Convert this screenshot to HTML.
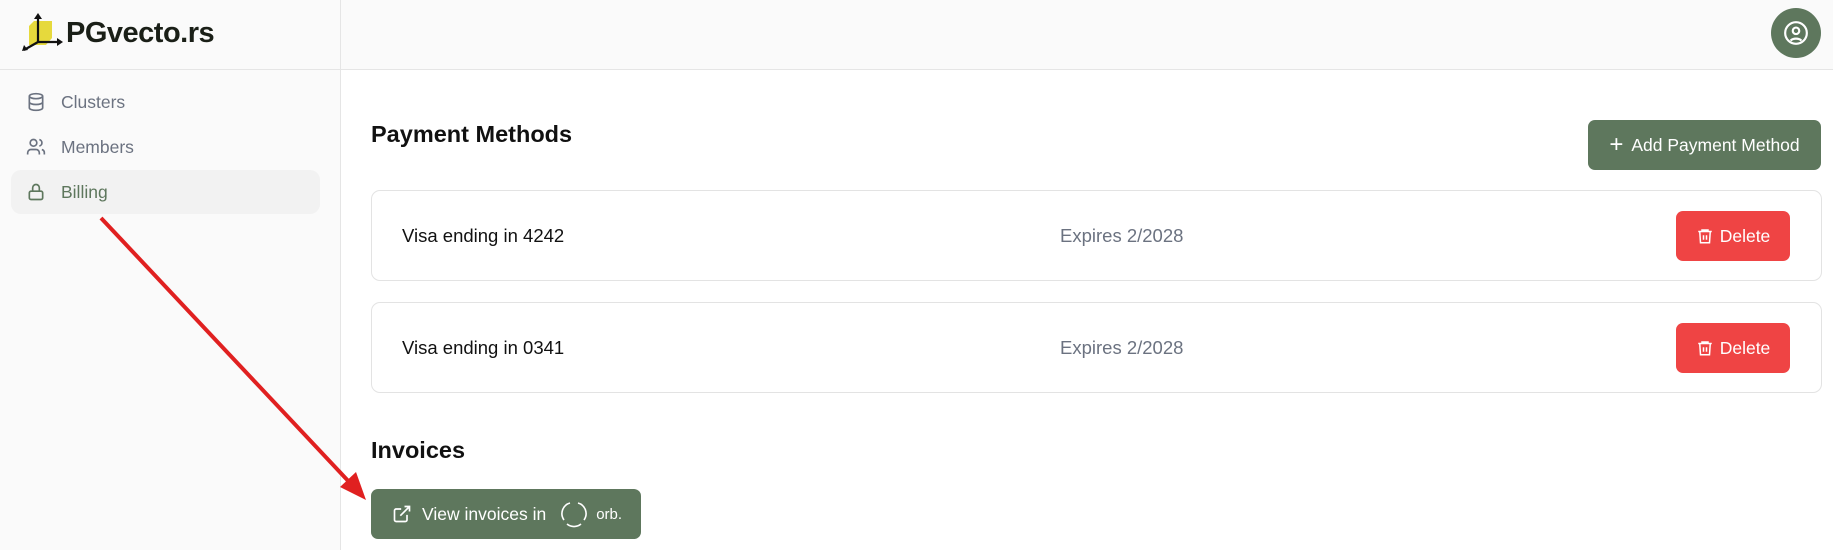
<!DOCTYPE html>
<html><head><meta charset="utf-8"><style>
*{box-sizing:border-box;margin:0;padding:0}
body{width:1833px;height:550px;background:#fff;font-family:"Liberation Sans",Roboto,sans-serif;position:relative;overflow:hidden;color:#111}
.side{position:absolute;left:0;top:0;width:341px;height:550px;background:#fafafa;border-right:1px solid #e5e5e5}
.top{position:absolute;left:341px;top:0;right:0;height:70px;background:#fafafa;border-bottom:1px solid #e5e5e5}
.sidetop{position:absolute;left:0;top:0;width:341px;height:70px;border-bottom:1px solid #e5e5e5}
.logo{position:absolute;left:66px;top:17px;font-size:29px;font-weight:bold;color:#1a1f17;letter-spacing:-0.5px}
.nav{position:absolute;left:11px;width:309px;height:44px;border-radius:10px;font-size:17.5px;color:#6b7280;display:flex;align-items:center;padding-left:50px}
.nav svg{position:absolute;left:15px;top:12px}
.h{position:absolute;left:371px;font-size:23.5px;font-weight:bold;color:#111}
.btn{position:absolute;background:#5e775d;color:#fff;border-radius:7px;font-size:17.5px;display:flex;align-items:center;justify-content:center}
.card{position:absolute;left:371px;width:1451px;height:91px;border:1px solid #e3e3e3;border-radius:9px;background:#fff}
.card .a{position:absolute;left:30px;top:34px;font-size:18.5px;color:#111}
.card .b{position:absolute;left:688px;top:34px;font-size:18.5px;color:#6b7280}
.del{position:absolute;left:1304px;top:20px;width:114px;height:50px;background:#ef4444;color:#fff;border-radius:7px;font-size:17.5px;display:flex;align-items:center;justify-content:center;gap:6px}
</style></head><body>
<div class="side"></div>
<div class="sidetop"></div>
<div class="top"></div>
<svg style="position:absolute;left:20px;top:12px" width="44" height="40" viewBox="0 0 44 40">
<polygon points="9,14 14,9 32,9 32,26 26,33 9,33" fill="#e6d93c"/>
<path d="M18 30 V4 M18 30 L40 30 M18 30 L4 38" stroke="#111" stroke-width="2.2" fill="none"/>
<polygon points="18,1 14,7 22,7" fill="#111"/><polygon points="43,30 37,26 37,34" fill="#111"/><polygon points="2,39 4,33 8,38" fill="#111"/>
</svg>
<div class="logo">PGvecto.rs</div>
<div class="nav" style="top:80px"><svg width="20" height="20" viewBox="0 0 24 24" fill="none" stroke="#6b7280" stroke-width="2"><ellipse cx="12" cy="5" rx="8" ry="3"/><path d="M4 5v14c0 1.7 3.6 3 8 3s8-1.3 8-3V5M4 12c0 1.7 3.6 3 8 3s8-1.3 8-3"/></svg>Clusters</div>
<div class="nav" style="top:125px"><svg width="20" height="20" viewBox="0 0 24 24" fill="none" stroke="#6b7280" stroke-width="2"><circle cx="9" cy="7" r="4"/><path d="M2 21v-2a4 4 0 014-4h6a4 4 0 014 4v2M16 3.1a4 4 0 010 7.8M22 21v-2a4 4 0 00-3-3.9"/></svg>Members</div>
<div class="nav" style="top:170px;background:#f2f2f2;color:#5e775d"><svg width="20" height="20" viewBox="0 0 24 24" fill="none" stroke="#5e775d" stroke-width="2"><rect x="4" y="11" width="16" height="10" rx="2"/><path d="M8 11V7a4 4 0 018 0v4"/></svg>Billing</div>
<div style="position:absolute;left:1771px;top:8px;width:50px;height:50px;border-radius:50%;background:#5e775d"></div>
<svg style="position:absolute;left:1783px;top:20px" width="26" height="26" viewBox="0 0 24 24" fill="none" stroke="#fff" stroke-width="2"><circle cx="12" cy="12" r="10"/><circle cx="12" cy="10" r="3"/><path d="M7 19a6 4 0 0110 0"/></svg>
<div class="h" style="top:121px">Payment Methods</div>
<div class="btn" style="left:1588px;top:120px;width:233px;height:50px"><span style="font-size:24px;margin-right:8px;font-weight:300">+</span>Add Payment Method</div>
<div class="card" style="top:190px"><div class="a">Visa ending in 4242</div><div class="b">Expires 2/2028</div>
<div class="del"><svg width="18" height="18" viewBox="0 0 24 24" fill="none" stroke="#fff" stroke-width="2"><path d="M3 6h18M8 6V4h8v2M5 6l1 15h12l1-15M10 11v6M14 11v6"/></svg>Delete</div></div>
<div class="card" style="top:302px"><div class="a">Visa ending in 0341</div><div class="b">Expires 2/2028</div>
<div class="del"><svg width="18" height="18" viewBox="0 0 24 24" fill="none" stroke="#fff" stroke-width="2"><path d="M3 6h18M8 6V4h8v2M5 6l1 15h12l1-15M10 11v6M14 11v6"/></svg>Delete</div></div>
<div class="h" style="top:437px">Invoices</div>
<div class="btn" style="left:371px;top:489px;width:270px;height:50px;justify-content:flex-start;padding-left:21px">
<svg width="20" height="20" viewBox="0 0 24 24" fill="none" stroke="#fff" stroke-width="2" style="margin-right:10px"><path d="M18 13v6a2 2 0 01-2 2H5a2 2 0 01-2-2V8a2 2 0 012-2h6M15 3h6v6M10 14L21 3"/></svg>View invoices in
<svg width="28" height="28" viewBox="0 0 28 28" fill="none" stroke="#fff" stroke-width="1.6" style="margin-left:14px"><path d="M10 3A11 11 0 004 20M18 3a11 11 0 016 17M7 24a11 11 0 0014 0"/></svg>
<span style="margin-left:8px;font-size:15px">orb.</span></div>
<svg style="position:absolute;left:0;top:0" width="1833" height="550"><line x1="101" y1="218" x2="352" y2="485" stroke="#e02020" stroke-width="4"/><polygon points="366,500 340,487 356,472" fill="#e02020"/></svg>
</body></html>
